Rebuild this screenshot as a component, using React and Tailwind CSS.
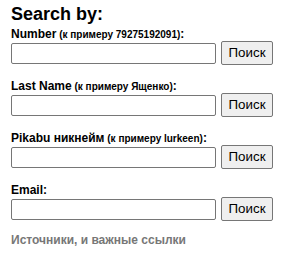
import React from 'react';

const fields = [
  { label: 'Number', hint: '(к примеру 79275192091)' },
  { label: 'Last Name', hint: '(к примеру Ященко)' },
  { label: 'Pikabu никнейм', hint: '(к примеру lurkeen)' },
  { label: 'Email', hint: null },
];

const SearchRow = ({ label, hint }) => {
  return (
    <div>
      <div className="h-[14px] text-[12px] font-bold leading-[14px] text-black">
        {label}
        {hint && <span className="text-[10px] leading-none"> {hint}</span>}:
      </div>
      <div className="flex h-[24px] items-center gap-[5px]">
        <input
          type="text"
          className="h-[21px] w-[205px] rounded-[2px] border border-[#767676] bg-white px-1 text-[13px] outline-none"
        />
        <button className="h-[24px] w-[52px] rounded-[2px] border border-[#767676] bg-[#efefef] text-[13.33px] leading-none text-black">
          Поиск
        </button>
      </div>
    </div>
  );
};

const App = () => {
  return (
    <div className="min-h-screen bg-white pl-[11px] pt-[3px] font-['Liberation_Sans',Arial,sans-serif]">
      <h2 className="text-[18px] font-bold leading-[22px] text-black">Search by:</h2>
      <div className="mt-[2px] flex flex-col gap-[14px]">
        {fields.map((f) => (
          <SearchRow key={f.label} label={f.label} hint={f.hint} />
        ))}
      </div>
      <a href="#" className="mt-[12px] block text-[12px] font-bold leading-[14px] text-[#777777]">
        Источники, и важные ссылки
      </a>
    </div>
  );
};

export default App;
